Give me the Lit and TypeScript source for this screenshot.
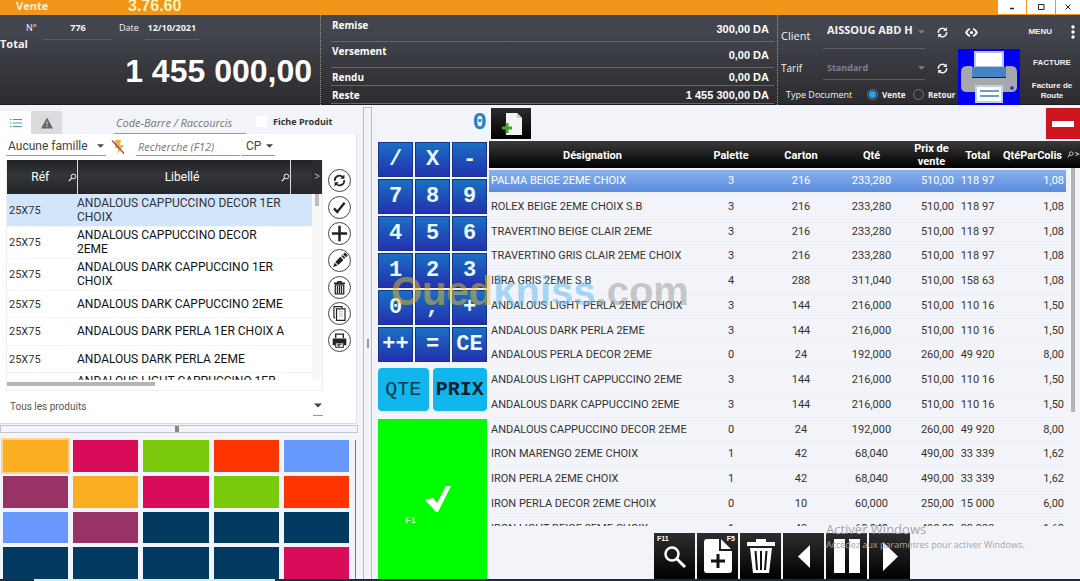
import { LitElement, html, css, svg } from "lit";
import { customElement, state } from "lit/decorators.js";
import { classMap } from "lit/directives/class-map.js";

const LINES: string[][] = [
  ["PALMA BEIGE 2EME CHOIX", "3", "216", "233,280", "510,00", "118 97", "1,08"],
  ["ROLEX BEIGE 2EME CHOIX S.B", "3", "216", "233,280", "510,00", "118 97", "1,08"],
  ["TRAVERTINO BEIGE CLAIR 2EME", "3", "216", "233,280", "510,00", "118 97", "1,08"],
  ["TRAVERTINO GRIS CLAIR 2EME CHOIX", "3", "216", "233,280", "510,00", "118 97", "1,08"],
  ["IBRA GRIS 2EME S.B", "4", "288", "311,040", "510,00", "158 63", "1,08"],
  ["ANDALOUS LIGHT PERLA 2EME CHOIX", "3", "144", "216,000", "510,00", "110 16", "1,50"],
  ["ANDALOUS DARK PERLA 2EME", "3", "144", "216,000", "510,00", "110 16", "1,50"],
  ["ANDALOUS PERLA DECOR 2EME", "0", "24", "192,000", "260,00", "49 920", "8,00"],
  ["ANDALOUS LIGHT CAPPUCCINO 2EME", "3", "144", "216,000", "510,00", "110 16", "1,50"],
  ["ANDALOUS DARK CAPPUCCINO 2EME", "3", "144", "216,000", "510,00", "110 16", "1,50"],
  ["ANDALOUS CAPPUCCINO DECOR 2EME", "0", "24", "192,000", "260,00", "49 920", "8,00"],
  ["IRON MARENGO 2EME CHOIX", "1", "42", "68,040", "490,00", "33 339", "1,62"],
  ["IRON PERLA 2EME CHOIX", "1", "42", "68,040", "490,00", "33 339", "1,62"],
  ["IRON PERLA DECOR 2EME CHOIX", "0", "10", "60,000", "250,00", "15 000", "6,00"],
  ["IRON LIGHT BEIGE 2EME CHOIX", "1", "42", "68,040", "490,00", "33 339", "1,62"],
];

const PRODUCTS = [
  "ANDALOUS CAPPUCCINO DECOR 1ER CHOIX",
  "ANDALOUS CAPPUCCINO DECOR 2EME",
  "ANDALOUS DARK CAPPUCCINO 1ER CHOIX",
  "ANDALOUS DARK CAPPUCCINO 2EME",
  "ANDALOUS DARK PERLA 1ER CHOIX A",
  "ANDALOUS DARK PERLA 2EME",
  "ANDALOUS LIGHT CAPPUCCINO 1ER CHOIX",
];

const TILES = [
  "amber", "pink", "green", "red", "blue",
  "plum", "amber", "pink", "green", "red",
  "blue", "plum", "navy", "navy", "navy",
  "navy", "navy", "navy", "navy", "pink",
];

const KEYS = ["/", "X", "-", "7", "8", "9", "4", "5", "6", "1", "2", "3", "0", ",", "+", "++", "=", "CE"];

const refresh = svg`<path d="M4.5 10.5a5.6 5.6 0 0 1 9.5-4.6M15.500 9.500a5.600 5.600 0 0 1-9.500 4.600" fill="none" stroke="currentColor" stroke-width="2"/><path d="M15.800 3v5h-5zM4.200 17v-5h5z" fill="currentColor"/>`;

const SIDE = [
  { name: "Actualiser", art: refresh },
  { name: "Valider", art: svg`<path d="M3.500 11l3.800 4.200L16 4.500" fill="none" stroke="currentColor" stroke-width="2.800"/>` },
  { name: "Ajouter", art: svg`<path d="M10 1v18M1 10h18" fill="none" stroke="currentColor" stroke-width="3"/>` },
  { name: "Modifier", art: svg`<path d="M2.500 17.500l1.800-5 3.400 3.400zM5 11.700l6-6 3.600 3.600-6 6zM12 4.800l1.400-1.400 3.500 3.500-1.400 1.400zM14.200 2.600l1.400-1.400q.8-.5 1.500 0l2 2q.6.8 0 1.500l-1.400 1.400z" fill="currentColor"/>` },
  { name: "Supprimer", art: svg`<path d="M3.500 5h13M8 4.500V3h4v1.500M5 7v10.500h10V7zM7.600 8v8.500M10 8v8.500M12.400 8v8.500" fill="none" stroke="currentColor" stroke-width="1.500"/>` },
  { name: "Copier", art: svg`<path d="M13 3.500V2H3.500v13H5M6.500 4.500h10v13.500h-10z" fill="none" stroke="currentColor" stroke-width="1.400"/><path d="M9 8h5M9 10.500h5M9 13h5" stroke="#aaa" stroke-width="1"/>` },
  { name: "Imprimer", art: svg`<path d="M5.500 7V2.500h9V7" fill="none" stroke="currentColor" stroke-width="1.600"/><path d="M2 7.500h16v8h-3v-3.500H5v3.500H2z" fill="currentColor"/><path d="M5.500 12.500h9V18h-9zM7.500 14.500h5M7.500 16.200h3" fill="none" stroke="currentColor" stroke-width="1.200"/>` },
];

const caret = html`<svg class="caret" viewBox="0 0 8 4" aria-hidden="true"><path d="M0 0h8L4 4z" fill="currentColor"/></svg>`;
const lens = html`<svg class="lens" viewBox="0 0 10 10" aria-hidden="true"><circle cx="6" cy="3.800" r="2.600" fill="none" stroke="#fff"/><path d="M4 5.800L1 9" stroke="#fff" stroke-width="1.300"/></svg>`;

@customElement("app-root")
export class AppRoot extends LitElement {
  @state() private selected = 0;

  static styles = css`
    :host { display: flex; flex-direction: column; height: 100vh; overflow: hidden; position: relative;
      font-family: "Open Sans", "Noto Sans", sans-serif; font-size: 11px; color: #222; background: #f3f4f9; }
    * { box-sizing: border-box; }
    button, input, select { font: inherit; color: inherit; border: 0; padding: 0; margin: 0; background: none; border-radius: 0; }
    button { cursor: pointer; display: flex; align-items: center; justify-content: center; }
    select { appearance: none; width: 100%; min-width: 0; }
    svg { display: block; flex: none; }
    table { border-collapse: collapse; table-layout: fixed; }
    td, th { padding: 0; }
    .caret { width: 7px; height: 4px; pointer-events: none; }
    .icon { width: 15px; height: 15px; }

    .title { height: 15px; flex: none; display: flex; background: #f29519; color: #fff0c8; font-weight: 700; line-height: 11px; }
    .title .name { width: 128px; padding-left: 16px; }
    .title .version { flex: 1; font-family: "Liberation Sans", sans-serif; font-size: 16px; color: #fff3b8; }
    .title nav { display: flex; gap: 1px; }
    .title nav button { width: 28px; height: 14px; background: #fff; color: #222; }
    .title nav button:last-child { width: 24px; }
    .title nav svg { width: 10px; height: 10px; }

    .head { height: 90px; flex: none; display: grid; grid-template-columns: 321px minmax(0, 1fr) 302px; color: #f2f2f2;
      background: linear-gradient(#43454c, #42454f 20%, #37373c 60%, #2c2c30); border-bottom: 1px solid #1d1d20; }
    .sum { display: flex; flex-direction: column; border-right: 1px dotted #999; }
    .doc { display: flex; gap: 6px; height: 25px; padding-left: 26px; font-size: 9px; }
    .doc label { line-height: 25px; }
    .doc .no { width: 11px; }
    .doc input { height: 25px; border-bottom: 1px solid #5a5b62; font-weight: 700; text-align: center; width: 70px; }
    .doc .date { width: 54px; }
    .sum h2 { margin: 0; font-size: 11px; line-height: 8px; }
    .sum output { font-family: "Liberation Sans", sans-serif; font-weight: 700; font-size: 32px; line-height: 46px; color: #fff; text-align: right; padding-right: 8px; }
    .pay { margin: 0; padding: 1px 3px 0 10px; display: flex; flex-direction: column; border-right: 1px dotted #999; font-weight: 700; color: #fff; font-size: 10px; }
    .pay div { display: flex; justify-content: space-between; border-bottom: 1px solid #66676d; height: 18px; line-height: 18px; padding: 0 5px 0 1px; }
    .pay .tall { height: 26px; line-height: 18px; }
    .pay dd { margin: 0; font-family: "Liberation Sans", sans-serif; font-size: 11px; }
    .pay .tall dd { padding-top: 4px; }
    .right { display: grid; grid-template-columns: 180px 62px minmax(0, 1fr); grid-template-rows: 34px minmax(0, 1fr); }
    .form { grid-row: span 2; display: flex; flex-direction: column; }
    .field { display: flex; align-items: center; height: 35px; padding-left: 3px; font-size: 11px; }
    .field label { width: 42px; flex: none; padding-top: 6px; }
    .field .pick { width: 102px; border-bottom: 1px solid #5c5d64; margin-right: 10px; color: #7d7e86; }
    .pick { display: flex; align-items: center; }
    .pick select { text-overflow: clip; }
    .field select { font-weight: 700; height: 32px; padding: 0 0 6px 4px; color: #f4f4f4; }
    .field.tarif { height: 36px; }
    .field.tarif label { font-size: 10px; padding: 0; }
    .field.tarif select { font-size: 9px; color: #7c8194; height: 22px; padding-bottom: 0; }
    .type { display: flex; align-items: center; height: 16px; padding-left: 8px; font-size: 9px; border: 0; margin: 0; }
    .type span { width: 78px; }
    .type label { display: flex; align-items: center; gap: 4px; font-weight: 700; font-size: 8px; width: 46px; flex: none; }
    .type input { appearance: none; width: 11px; height: 11px; border: 1px solid #77787d; border-radius: 50%; margin-left: 3px; flex: none; }
    .type input:checked { border-color: #2593dd; background: radial-gradient(#2fa1ea 0 3px, transparent 4px); }
    .eye { justify-content: flex-start; padding-left: 6px; }
    .print { grid-column: 2; grid-row: 2; background: #0000f2; }
    .print svg { width: 60px; height: 54px; }
    .menu { grid-column: 3; grid-row: 1 / 3; display: flex; flex-direction: column; font: 700 8px/10px "Liberation Sans", sans-serif; padding-left: 4px; }
    .menu button { height: 28px; }
    .menu .more { height: 34px; gap: 18px; justify-content: flex-end; padding-right: 4px; }
    .menu .more svg { width: 6px; height: 14px; }

    .main { flex: 1; min-height: 0; display: grid; grid-template-columns: 358px minmax(0, 1fr); grid-template-rows: minmax(0, 1fr); }
    .left { display: flex; flex-direction: column; min-height: 0; padding-top: 6px; }
    .tabs { display: flex; height: 23px; flex: none; }
    .tabs > button { width: 31px; background: #fff; color: #3f9fb3; }
    .tabs > .alert { background: #dcdcdf; color: #666; }
    .tabs svg { width: 12px; height: 12px; }
    .code { width: 132px; margin: 0 10px 0 52px; padding-left: 2px; border-bottom: 1px solid #999; font-style: italic; font-size: 11px; }
    input::placeholder { color: #777; opacity: 1; }
    .fiche { display: flex; align-items: center; gap: 6px; font-weight: 700; font-size: 9px; color: #333; height: 20px; }
    .fiche input { appearance: none; width: 11px; height: 11px; background: #fff; }
    .card { flex: 1; min-height: 0; background: #fff; border-right: 1px solid #e0e2ea; border-bottom: 1px solid #ddd; margin-right: 1px; padding: 3px 5px 0 6px; display: flex; flex-direction: column; }
    .filters { display: flex; height: 19px; flex: none; }
    .filters .pick { width: 100px; border-bottom: 1px solid #999; font: 12px Roboto, sans-serif; color: #444; padding: 0 2px; }
    .filters .pick.cp { width: 34px; margin-left: 1px; padding: 0 2px 0 5px; }
    .filters .flash { width: 14px; margin: 0 11px 0 5px; }
    .filters .flash svg { width: 14px; height: 16px; }
    .filters > input { width: 104px; padding-left: 2px; border-bottom: 1px solid #999; font-style: italic; flex: none; }
    .list { flex: 1; min-height: 0; display: flex; justify-content: space-between; padding-top: 4px; }
    .box { width: 317px; border: 1px solid #eee; border-top: 0; display: flex; flex-direction: column; }
    .clip { flex: 1; min-height: 0; overflow: hidden; display: flex; }
    .products { width: 305px; flex: none; align-self: flex-start; font-family: Roboto, sans-serif; font-size: 12px; line-height: 14px; color: #111; }
    .products th { height: 34px; font: 12px Roboto, sans-serif; color: #fff; background: linear-gradient(#202124, #34363a 45%, #222427); border-right: 1px solid #ddd; }
    .products th:last-child { border: 0; }
    .th { display: flex; align-items: center; }
    .th span { flex: 1; text-align: center; padding-left: 6px; }
    .lens { width: 9px; height: 9px; }
    .products tbody tr { height: 27px; border-bottom: 1px solid #f3f3f3; }
    .products tbody tr:nth-child(odd) { height: 28px; }
    .products tbody tr.two { height: 32px; }
    .products tbody tr.on { background: #d3e5fa; color: #333; }
    .products .ref { font-size: 11px; padding: 2px 0 0 2px; color: #333; }
    .rail { flex: 1; background: linear-gradient(#2b2c2f 34px, #f8f8f8 34px); color: #ccc; font-size: 10px; line-height: 32px; text-align: center; }
    .thumb { width: 4px; height: 12px; background: #bbb; margin: 2px auto 0; }
    .hbar { height: 10px; flex: none; padding-top: 2px; }
    .hbar div { width: 148px; height: 4px; background: #b5b5b5; }
    .side { display: flex; flex-direction: column; justify-content: space-between; padding: 9px 0 39px; }
    .side button { width: 23px; height: 23px; border: 1px solid #444; border-radius: 50%; color: #222; background: #fff; }
    .side svg { width: 17px; height: 17px; }
    .all { height: 32px; flex: none; padding: 4px 28px 6px 4px; }
    .all .pick { font: 10px Roboto, sans-serif; color: #555; height: 22px; }
    .all .caret { color: #444; width: 10px; height: 20px; border-bottom: 1px solid #999; padding: 0 1px; }
    .split { height: 8px; flex: none; margin: 1px 0 7px; border: 1px solid #c4c6ce; background: linear-gradient(90deg, transparent 49%, #888 49%, #888 50%, transparent 50%); }
    .tiles { height: 139px; flex: none; display: grid; grid-template: repeat(4, 1fr) / repeat(5, 1fr); gap: 4px 5px; padding: 0 6px 0 3px; border-right: 1px solid #778; margin-right: 2px; }
    .amber { background: #fbae22; } .pink { background: #d80c59; } .green { background: #7ac90c; } .red { background: #ff3400; }
    .blue { background: #6699fb; } .plum { background: #993365; } .navy { background: #033a62; }
    .tiles button:first-child { outline: 2px solid #fbd48a; }

    .work { display: grid; grid-template-columns: 9px 117px minmax(0, 1fr); grid-template-rows: 36px minmax(0, 1fr); padding-left: 5px; }
    .bar { grid-row: span 2; border: solid #b9bbc8; border-width: 1px 1px 0; margin: 2px 0 0; display: flex; align-items: center; justify-content: center; }
    .bar i { width: 2px; height: 9px; background: #999; }
    .lcd { font: 700 24px/35px "Liberation Mono", monospace; color: #1d84c8; text-align: right; padding-right: 2px; }
    .strip { display: flex; justify-content: space-between; padding: 3px 0 2px 2px; }
    .strip button { width: 40px; background: linear-gradient(#2c2c2c, #000); }
    .strip .minus { width: 34px; background: #cb171d; }
    .strip svg { width: 24px; height: 26px; }
    .pad { display: flex; flex-direction: column; padding: 1px 2px 0 6px; min-height: 0; }
    .keys { display: grid; grid-template-columns: repeat(3, minmax(0, 1fr)); gap: 2px; }
    .keys button { height: 35px; border: 1px solid #14348f; background: linear-gradient(#1a6fc4, #2331ad); color: #e8fbff; font: 700 22px "Liberation Mono", monospace; }
    .modes { display: flex; gap: 4px; padding: 6px 0 8px; }
    .modes button { flex: 51; height: 43px; border-radius: 4px; background: #10b6ec; color: #0c3850; font: 20px "Liberation Mono", monospace; }
    .modes .bold { flex: 55; font-weight: 700; color: #08222f; }
    .ok { flex: 1; background: #0f0; color: #d8ffd0; font: 700 9px "Liberation Sans", sans-serif; }
    .ok span { padding-top: 42px; }
    .ok svg { width: 28px; height: 28px; margin: 0 8px; }
    .grid { display: flex; flex-direction: column; min-height: 0; }
    .tick { flex: 1; min-height: 0; overflow: hidden; display: flex; background: linear-gradient(#3a3a3a, #000 27px, transparent 27px); }
    .ticket { flex: 1; min-width: 0; align-self: flex-start; font: 11px/14px Roboto, sans-serif; color: #333; }
    .ticket th { height: 28px; font-weight: 700; line-height: 13px; color: #fff; white-space: nowrap; }
    .ticket th.wrap { white-space: normal; }
    .ticket tbody tr { height: 25px; border-bottom: 1px solid #eceef3; }
    .ticket tbody tr:nth-child(4n) { height: 24px; }
    .ticket tbody tr.on { color: #fff; background: linear-gradient(#f3f4f9 1px, #8ab2ee 1px, #5b8bdc 23px, #f3f4f9 23px); }
    .ticket td { text-align: center; white-space: nowrap; }
    .ticket td:first-child { text-align: left; padding-left: 2px; }
    .ticket td:nth-child(5), .ticket td:nth-child(7) { text-align: right; padding-right: 2px; }
    .vbar { width: 14px; flex: none; color: #ddd; font: 9px/27px Roboto, sans-serif; display: flex; flex-direction: column; align-items: center; }
    .vbar span { display: flex; align-items: center; gap: 1px; height: 27px; }
    .vbar .lens { width: 7px; height: 7px; }
    .vbar div { width: 4px; height: 244px; background: #b4b4b8; }
    .tools { display: flex; gap: 2px; padding: 7px 0 0 165px; flex: none; }
    .tools button { width: 41px; height: 46px; background: linear-gradient(#2e2e2e, #000); position: relative; }
    .tools svg { width: 32px; height: 40px; }
    .tools kbd { position: absolute; top: 1px; left: 3px; font: 700 7px/9px "Liberation Sans", sans-serif; color: #fff; }
    .tools .end { left: auto; right: 3px; }
    .foot { height: 2px; flex: none; background: linear-gradient(90deg, #12303c 34px, #dcebf7 34px, #dcebf7 275px, #1c2c38 275px); }

    .mark { position: absolute; left: 391px; top: 268px; font: 700 40px/46px "Liberation Sans", sans-serif; opacity: 0.5; pointer-events: none; color: #999; }
    .mark .y { color: #e8c020; } .mark .b { color: #5cb8ee; }
    .win { position: absolute; left: 826px; top: 520px; color: #a3a4a8; pointer-events: none; font-size: 9px; line-height: 14px; }
    .win strong { display: block; font-weight: 400; font-size: 13px; line-height: 18px; }
  `;

  private headBar() {
    return html`
      <header class="title">
        <span class="name">Vente</span><span class="version">3.76.60</span>
        <nav>
          <button aria-label="Réduire"><svg viewBox="0 0 10 10"><path d="M3 6.500h4" stroke="#222" stroke-width="1.500"/></svg></button>
          <button aria-label="Agrandir"><svg viewBox="0 0 10 10"><path d="M2.500 2.500h5.500v5h-5.500z" fill="none" stroke="#222"/></svg></button>
          <button aria-label="Fermer"><svg viewBox="0 0 10 10"><path d="M2.500 2.500l5 5M7.500 2.500l-5 5" stroke="#222"/></svg></button>
        </nav>
      </header>
      <section class="head">
        <div class="sum">
          <div class="doc">
            <label class="no" for="num">N°</label><input id="num" value="776" />
            <label for="date">Date</label><input class="date" id="date" value="12/10/2021" />
          </div>
          <h2>Total</h2>
          <output>1 455 000,00</output>
        </div>
        <dl class="pay">
          <div class="tall"><dt>Remise</dt><dd>300,00 DA</dd></div>
          <div class="tall"><dt>Versement</dt><dd>0,00 DA</dd></div>
          <div><dt>Rendu</dt><dd>0,00 DA</dd></div>
          <div><dt>Reste</dt><dd>1 455 300,00 DA</dd></div>
        </dl>
        <div class="right">
          <div class="form">
            <div class="field">
              <label for="client">Client</label>
              <div class="pick"><select id="client"><option>AISSOUG ABD H</option></select>${caret}</div>
              <button aria-label="Actualiser le client"><svg class="icon" viewBox="0 0 20 20">${refresh}</svg></button>
            </div>
            <div class="field tarif">
              <label for="tarif">Tarif</label>
              <div class="pick"><select id="tarif"><option>Standard</option></select>${caret}</div>
              <button aria-label="Actualiser le tarif"><svg class="icon" viewBox="0 0 20 20">${refresh}</svg></button>
            </div>
            <div class="type">
              <span>Type Document</span>
              <label><input type="radio" name="type" checked />Vente</label>
              <label><input type="radio" name="type" />Retour</label>
            </div>
          </div>
          <button class="eye" aria-label="Voir le client"><svg class="icon" viewBox="0 0 14 14"><path d="M5.500 3.500Q3 4.800 2 7q1 2.200 3.500 3.500M8.500 3.500Q11 4.800 12 7q-1 2.200-3.500 3.500" fill="none" stroke="#fff" stroke-width="1.700"/><circle cx="7" cy="7" r="1.500" fill="#fff"/></svg></button>
          <button class="print" aria-label="Imprimer">
            <svg viewBox="0 0 60 54">
              <path d="M8 16h5v12h34V16h5q6 0 6 6v15q0 5-6 5H8q-6 0-6-5V22q0-6 6-6z" fill="#a6a8ac"/>
              <path d="M16 2h28v15H16z" fill="#fff" stroke="#b6c4ee" stroke-width="2"/>
              <path d="M13 17h34v10H13z" fill="#4583c4"/>
              <path d="M17 36h26v16H17z" fill="#fff" stroke="#c2ccec" stroke-width="2"/>
              <path d="M21 41h19M21 46h19" stroke="#3a7fb4" stroke-width="1.500"/>
              <circle cx="53" cy="38" r="1.700" fill="#1b20d0"/>
            </svg>
          </button>
          <nav class="menu">
            <button class="more">MENU<svg viewBox="0 0 6 14"><circle cx="3" cy="2" r="1.700" fill="#fff"/><circle cx="3" cy="7" r="1.700" fill="#fff"/><circle cx="3" cy="12" r="1.700" fill="#fff"/></svg></button>
            <button>FACTURE</button>
            <button>Facture de<br />Route</button>
          </nav>
        </div>
      </section>`;
  }

  private leftPane() {
    return html`
      <section class="left">
        <div class="tabs">
          <button aria-label="Liste"><svg viewBox="0 0 12 12"><path d="M0 2.500h1.500M0 6h1.500M0 9.500h1.500M3 2.500h9M3 6h9M3 9.500h9" stroke="currentColor"/></svg></button>
          <button class="alert" aria-label="Alertes"><svg viewBox="0 0 12 12"><path d="M6 .5L12 11.500H0z" fill="currentColor"/><path d="M6 4.500v3M6 8.500v1.500" stroke="#dcdcdf"/></svg></button>
          <input class="code" aria-label="Code-Barre / Raccourcis" placeholder="Code-Barre / Raccourcis" />
          <label class="fiche"><input type="checkbox" />Fiche Produit</label>
        </div>
        <div class="card">
          <div class="filters">
            <div class="pick"><select aria-label="Famille"><option>Aucune famille</option></select>${caret}</div>
            <button class="flash" aria-label="Effacer le filtre"><svg viewBox="0 0 14 16"><path d="M4 1h6L9 6h4l-7 9 1.500-6H4z" fill="#f3b03c"/><path d="M1 1.500l12 13" stroke="#a34a3c" stroke-width="1.300"/></svg></button>
            <input aria-label="Recherche" placeholder="Recherche (F12)" />
            <div class="pick cp"><select aria-label="Critère"><option>CP</option></select>${caret}</div>
          </div>
          <div class="list">
            <div class="box">
              <div class="clip">
                <table class="products">
                  <colgroup><col style="width:70px" /><col style="width:213px" /><col /></colgroup>
                  <thead><tr>
                    <th><div class="th"><span>Réf</span>${lens}</div></th>
                    <th><div class="th"><span>Libellé</span>${lens}</div></th>
                    <th></th>
                  </tr></thead>
                  <tbody>
                    ${PRODUCTS.map((p, i) => html`
                      <tr class=${classMap({ on: i === 0, two: i < 3 || i === 6 })}><td class="ref">25X75</td><td>${p}</td><td></td></tr>`)}
                  </tbody>
                </table>
                <div class="rail">&gt;<div class="thumb"></div></div>
              </div>
              <div class="hbar"><div></div></div>
            </div>
            <div class="side">
              ${SIDE.map((s) => html`<button aria-label=${s.name}><svg viewBox="0 0 20 20">${s.art}</svg></button>`)}
            </div>
          </div>
          <div class="all"><div class="pick"><select aria-label="Filtre produits"><option>Tous les produits</option></select>${caret}</div></div>
        </div>
        <div class="split"></div>
        <div class="tiles">${TILES.map((t, i) => html`<button class=${t} aria-label="Raccourci ${i + 1}"></button>`)}</div>
      </section>`;
  }

  private workPane() {
    return html`
      <section class="work">
        <div class="bar"><i></i></div>
        <output class="lcd">0</output>
        <div class="strip">
          <button aria-label="Nouveau ticket"><svg viewBox="0 0 24 26"><path d="M7 2h11l5 5v17H7z" fill="#f4f4f4"/><path d="M18 2v5h5" fill="#ccc"/><path d="M8 12v10M3 17h10" stroke="#4aa02c" stroke-width="3"/></svg></button>
          <button class="minus" aria-label="Retirer"><svg viewBox="0 0 24 26"><path d="M1 10h22v6H1z" fill="#fff"/></svg></button>
        </div>
        <div class="pad">
          <div class="keys">${KEYS.map((k) => html`<button>${k}</button>`)}</div>
          <div class="modes"><button>QTE</button><button class="bold">PRIX</button></div>
          <button class="ok"><span>F1</span><svg viewBox="0 0 28 28"><path d="M1 15l8-2 4 5L22 1h5L14 27h-2z" fill="#fff"/></svg></button>
        </div>
        <div class="grid">
          <div class="tick">
            <table class="ticket">
              <colgroup><col /><col style="width:70px" /><col style="width:70px" /><col style="width:71px" /><col style="width:49px" /><col style="width:43px" /><col style="width:67px" /></colgroup>
              <thead><tr><th>Désignation</th><th>Palette</th><th>Carton</th><th>Qté</th><th class="wrap">Prix de vente</th><th>Total</th><th>QtéParColis</th></tr></thead>
              <tbody>
                ${LINES.map((l, i) => html`
                  <tr class=${classMap({ on: i === this.selected })} @click=${() => (this.selected = i)}>${l.map((c) => html`<td>${c}</td>`)}</tr>`)}
              </tbody>
            </table>
            <div class="vbar"><span>${lens}&gt;</span><div></div></div>
          </div>
          <div class="tools">
            <button aria-label="Rechercher"><kbd>F11</kbd><svg viewBox="0 0 32 40"><circle cx="13" cy="18" r="6.500" fill="none" stroke="#fff" stroke-width="2.500"/><path d="M18 23l8 8" stroke="#fff" stroke-width="3"/></svg></button>
            <button aria-label="Nouveau"><kbd class="end">F5</kbd><svg viewBox="0 0 32 40"><path d="M5 3h12v12h13v19q0 3-3 3H5q-3 0-3-3V6q0-3 3-3zM19 3l10 10H19z" fill="#fff"/><path d="M16 18v14M9 25h14" stroke="#111" stroke-width="3"/></svg></button>
            <button aria-label="Supprimer"><svg viewBox="0 0 32 40"><path d="M11 3h10v3h9v4H2V6h9z" fill="#fff"/><path d="M5 12h22l-3 25H8z" fill="#fff"/><path d="M10.500 15l1.500 19M16 15v19M21.500 15l-1.500 19" stroke="#111" stroke-width="2"/></svg></button>
            <button aria-label="Précédent"><svg viewBox="0 0 32 40"><path d="M22 9v23L10 20.500z" fill="#fff"/></svg></button>
            <button aria-label="Pause"><svg viewBox="0 0 32 40"><path d="M3 3h11v34H3zM18 3h11v34H18z" fill="#fff"/></svg></button>
            <button aria-label="Suivant"><svg viewBox="0 0 32 40"><path d="M9 6v29l15-14.500z" fill="#fff"/></svg></button>
          </div>
        </div>
      </section>`;
  }

  render() {
    return html`
      ${this.headBar()}
      <main class="main">${this.leftPane()}${this.workPane()}</main>
      <footer class="foot"></footer>
      <div class="mark"><span class="y">Oued</span><span class="b">kniss</span>.com</div>
      <div class="win"><strong>Activer Windows</strong>Accédez aux paramètres pour activer Windows.</div>`;
  }
}
